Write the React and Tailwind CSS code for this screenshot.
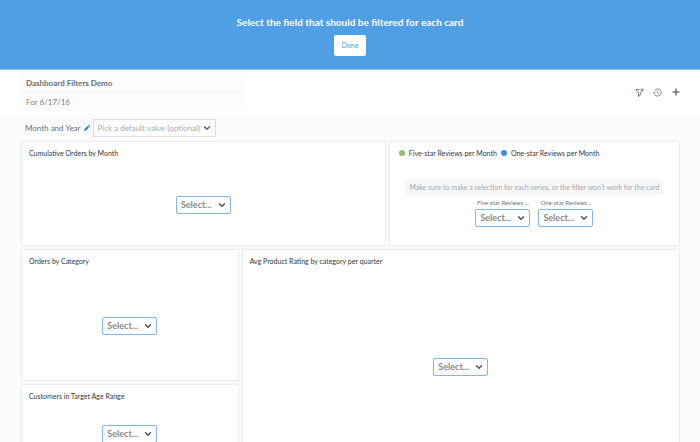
import { ChevronDown, Plus } from "lucide-react";

function FieldSelect({ label }) {
  return (
    <div className="relative h-[18px] w-[55px]">
      <select
        aria-label={label}
        className="block h-full w-full appearance-none rounded-xs border border-[#85b3ec] bg-white pl-1 text-[9px] leading-4 font-bold text-[#85898c]"
      >
        <option>Select...</option>
      </select>
      <ChevronDown className="pointer-events-none absolute top-1 right-1 size-[10px] text-[#4f5558]" strokeWidth={3.5} />
    </div>
  );
}

function DashCard({ title, className, children }) {
  return (
    <section className={`flex flex-col rounded-xs border border-[#e9edee] bg-white shadow-[0_0_1px_#dfe4e6] ${className}`}>
      <header className="flex h-[22px] items-center px-[7px] text-[7px] text-[#33383b]">{title}</header>
      <div className="flex flex-1 flex-col items-center justify-center">{children}</div>
    </section>
  );
}

function LegendItem({ color, children }) {
  return (
    <span className="flex items-center gap-1">
      <span className={`size-[6px] rounded-full ${color}`} />
      {children}
    </span>
  );
}

function SeriesField({ label }) {
  return (
    <div className="flex flex-col items-center">
      <span className="text-[6px] leading-[12px] text-[#6f7578]">{label}</span>
      <FieldSelect label={label} />
    </div>
  );
}

function FilterAddIcon() {
  return (
    <svg viewBox="0 0 16 16" className="size-[9px]" fill="none" stroke="currentColor" strokeWidth="1.6">
      <path d="M8 2.5H1.5l4.7 6v6.5l3.2-2.2V8.5l2-2.3" />
      <path d="M12.5 0.5v6M9.5 3.5h6" />
    </svg>
  );
}

function HistoryIcon() {
  return (
    <svg viewBox="0 0 16 16" className="size-[9px]" fill="none" stroke="currentColor" strokeWidth="1.4">
      <path d="M2.5 5.2A6.3 6.3 0 1 1 2 9.5" />
      <path d="M0 6.5l2.3 2.8L4.8 6.6" />
      <path d="M8 4.8v3.6l2.5 1.4" />
    </svg>
  );
}

function PencilIcon() {
  return (
    <svg viewBox="0 0 12 12" className="size-[6px]" fill="#2f83d8">
      <path d="M0 12l1-4 6-6 3 3-6 6zM8 1l1-1h1l2 2v1l-1 1z" />
    </svg>
  );
}

export default function App() {
  return (
    <div className="min-h-screen bg-[#f9fbfc] font-['Lato',sans-serif]">
      <div className="flex h-[70px] flex-col items-center border-b border-[#8dc3f2] bg-[#509ee3] pt-[14px] text-white">
        <h1 className="text-[10px] leading-4 font-bold">Select the field that should be filtered for each card</h1>
        <button className="mt-[5px] h-[21px] w-[32px] rounded-xs bg-white text-[7px] text-[#509ee3]">Done</button>
      </div>

      <div className="flex h-11 items-center justify-between bg-white pr-[19px] pl-[21px]">
        <div className="flex w-[223px] flex-col bg-[#fcfcfc]">
          <input
            aria-label="Dashboard name"
            defaultValue="Dashboard Filters Demo"
            className="h-5 border-b border-[#f5f5f5] px-[5px] text-[8px] font-bold text-[#6b7073]"
          />
          <input
            aria-label="Description"
            defaultValue="For 6/17/16"
            className="h-[18px] px-[5px] text-[8px] text-[#7c8184]"
          />
        </div>
        <div className="flex items-center gap-[9px] text-[#6a7073]">
          <button aria-label="Add a filter"><FilterAddIcon /></button>
          <button aria-label="Revision history"><HistoryIcon /></button>
          <button aria-label="Add a question"><Plus className="size-[10px]" strokeWidth={3.5} /></button>
        </div>
      </div>

      <div className="flex items-center px-[25px] pt-[5px] pb-1">
        <label htmlFor="month-year" className="text-[8px] text-[#6d7376]">Month and Year</label>
        <button aria-label="Edit filter" className="mx-[3px]"><PencilIcon /></button>
        <div className="relative h-[18px] w-[123px]">
          <select
            id="month-year"
            className="block h-full w-full appearance-none border border-[#dcdfe1] bg-white pl-1 text-[8px] leading-4 text-[#a4a9ac]"
          >
            <option>Pick a default value (optional)</option>
          </select>
          <ChevronDown className="pointer-events-none absolute top-1 right-1 size-[10px] text-[#5c6265]" strokeWidth={3.5} />
        </div>
      </div>

      <main className="grid auto-rows-[24px] grid-cols-18 gap-[3px] pr-5 pl-[21px]">
        <DashCard title="Cumulative Orders by Month" className="col-span-10 row-span-4">
          <FieldSelect label="Cumulative Orders by Month" />
        </DashCard>
        <DashCard
          title={
            <span className="flex gap-1 pl-[2px]">
              <LegendItem color="bg-[#8fbf68]">Five-star Reviews per Month</LegendItem>
              <LegendItem color="bg-[#3f8fdd]">One-star Reviews per Month</LegendItem>
            </span>
          }
          className="col-span-8 row-span-4"
        >
          <div className="flex flex-col items-center pb-1">
            <p className="rounded-xs bg-[#f7f7f8] px-1 text-[7px] leading-4 text-[#a3a8b0]">
              Make sure to make a selection for each series, or the filter won't work for the card
            </p>
            <div className="mt-[2px] flex gap-2">
              <SeriesField label="Five-star Reviews ..." />
              <SeriesField label="One-star Reviews..." />
            </div>
          </div>
        </DashCard>
        <DashCard title="Orders by Category" className="col-span-6 row-span-5">
          <FieldSelect label="Orders by Category" />
        </DashCard>
        <DashCard title="Avg Product Rating by category per quarter" className="col-span-12 row-span-8">
          <FieldSelect label="Avg Product Rating by category per quarter" />
        </DashCard>
        <DashCard title="Customers in Target Age Range" className="col-span-6 row-span-3">
          <FieldSelect label="Customers in Target Age Range" />
        </DashCard>
      </main>
    </div>
  );
}
